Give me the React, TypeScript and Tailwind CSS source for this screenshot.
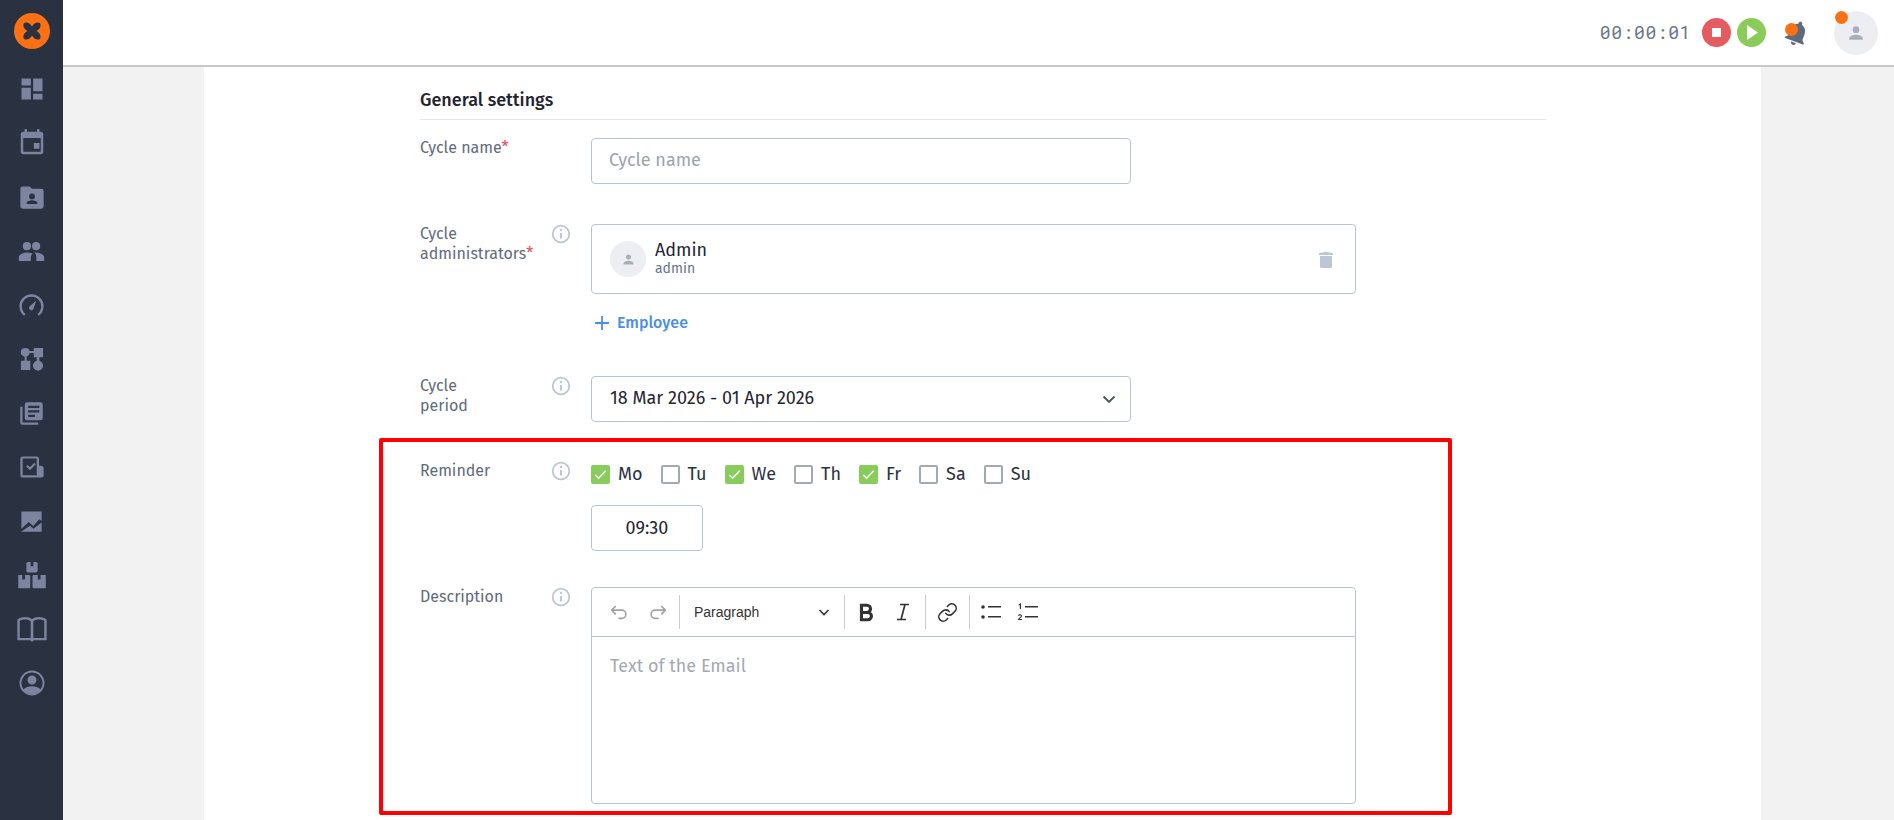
import React from "react";

const P = ({ d, size = 28, className = "" }: { d: string; size?: number; className?: string }) => (
  <svg width={size} height={size} viewBox="0 0 24 24" fill="currentColor" fillRule="evenodd" className={className}>
    <path d={d} />
  </svg>
);

const navIcons: { d: string; size: number }[] = [
  { d: "M3 3h8v6H3zM3 11h8v10H3zM13 3h8v11h-8zM13 16h8v5h-8z", size: 28 },
  { d: "M18 12h-4.500v4.500H18zM16 1v2H8V1H6v2H5a2 2 0 0 0-2 2v14c0 1.100.9 2 2 2h14a2 2 0 0 0 2-2V5a2 2 0 0 0-2-2h-1V1zm3 18H5V8h14z", size: 30 },
  { d: "M20 5h-8l-2-2H4a2 2 0 0 0-2 2v15c0 1.100.9 2 2 2h16a2 2 0 0 0 2-2V7a2 2 0 0 0-2-2zm-8 4a2.500 2.500 0 1 1 0 5 2.500 2.500 0 0 1 0-5zm4.500 9h-9v-1c0-1.500 3-2.300 4.500-2.300s4.500.8 4.500 2.300z", size: 28 },
  { d: "M8.200 11a3.400 3.400 0 1 0 0-6.800 3.400 3.400 0 0 0 0 6.800zm7.600 0a3.400 3.400 0 1 0 0-6.800 3.400 3.400 0 0 0 0 6.800zM8 12.800c-2.700 0-6.500 1.500-6.500 4.200v2.800h9.900V17c0-1.400.7-2.400 1.500-3.100-.9-.7-3.800-1.100-4.900-1.100zm8 0c-.5 0-1.100.1-1.600.2 1.200.9 1.600 2.300 1.600 3.800v3h6.500V17c0-2.700-3.800-4.200-6.500-4.200z", size: 29 },
  { d: "M5.800 20.500A10 10 0 1 1 18.200 20.500l-1.300-1.500A8 8 0 1 0 7.100 19zM10.600 15.400a2 2 0 0 0 2.800 0l2.600-7.500-5.400 4.700a2 2 0 0 0 0 2.800z", size: 29 },
  { d: "M6.500 2.500a3.600 3.600 0 0 1 3.500 2.700h3.500V2.500h8v8h-3.200v3.100a4.300 4.300 0 1 1-2.300 0v-3.100h-2.500V6.900H10a3.600 3.600 0 0 1-2.600 3.100v3.500h3.100v8h-8v-8h3.200V10a3.600 3.600 0 0 1 .8-7.500z", size: 28 },
  { d: "M4 6H2v14a2 2 0 0 0 2 2h14v-2H4zM20 2H8a2 2 0 0 0-2 2v12c0 1.100.9 2 2 2h12a2 2 0 0 0 2-2V4a2 2 0 0 0-2-2zm-1 9H9V9h10zm-4 4H9v-2h6zm4-8H9V5h10z", size: 27 },
  { d: "M4 3h12a2 2 0 0 1 2 2v6h1.500A2.500 2.500 0 0 1 22 13.500V19a2 2 0 0 1-2 2H4a2 2 0 0 1-2-2V5a2 2 0 0 1 2-2zm0 1.800V19h12.500c-.4-.6-.5-1.300-.5-2V5a.2.2 0 0 0-.2-.2zM7 11.500l1.300-1.300 2 2 3.600-3.900 1.300 1.300-4.900 5.200z", size: 28 },
  { d: "M3 3h18v8.500l-2-1.500-5.500 6-4-3.500L3 18.500zM3 21v-.2l7.600-5 3.100 2.700L21 12.800V21z", size: 27 },
  { d: "M8.700 1.500h2.200v3.500h2.200V1.500h2.200c.6 0 1.200.6 1.200 1.200v6c0 .6-.6 1.200-1.200 1.200H8.700c-.6 0-1.200-.6-1.200-1.200v-6c0-.6.6-1.200 1.200-1.200zM1 12h3.200v3.500h2.200V12h3.200c.5 0 1 .5 1 1v8.500c0 .5-.5 1-1 1H1zM13.400 12h3.200v3.500h2.200V12H23v10.500h-9.600a1 1 0 0 1-1-1V13c0-.5.5-1 1-1z", size: 30 },
  { d: "M12 21.500l-1.500-1H1V4.800C3 3.500 5 3 7 3c1.900 0 3.700.5 5 1.700C13.300 3.500 15.100 3 17 3c2 0 4 .5 6 1.800v15.700h-9.500zM2.800 5.800v12.900h8.200V6.200C9.900 5.300 8.400 4.800 7 4.800c-1.500 0-2.900.3-4.200 1zm18.400 0C19.900 5.100 18.500 4.800 17 4.800c-1.400 0-2.900.5-4 1.400v12.500h8.200z", size: 32 },
  { d: "M12 2a10 10 0 1 0 0 20 10 10 0 0 0 0-20zm0 1.600a8.400 8.400 0 0 1 6.700 13.400c-1.400-1.600-4-2.500-6.700-2.500s-5.300.9-6.700 2.500A8.400 8.400 0 0 1 12 3.600zm0 2.400a3.600 3.600 0 1 0 0 7.200A3.600 3.600 0 0 0 12 6z", size: 30 },
];

const Person = ({ size }: { size: number }) => (
  <svg width={size} height={size} viewBox="0 0 24 24" fill="#a9afbd">
    <circle cx="12" cy="8" r="4" />
    <path d="M4 20v-1.500C4 15.500 8.500 14 12 14s8 1.500 8 4.500V20z" />
  </svg>
);

const Info = () => (
  <svg width="20" height="20" viewBox="0 0 20 20" fill="none">
    <circle cx="10" cy="10" r="8.300" stroke="#bcc6d6" strokeWidth="1.800" />
    <circle cx="10" cy="6" r="1.200" fill="#bcc6d6" />
    <path d="M10 9v5.500" stroke="#bcc6d6" strokeWidth="2" />
  </svg>
);

const Row = ({ label, star, info, mt, children }: { label: React.ReactNode; star?: boolean; info?: boolean; mt: string; children: React.ReactNode }) => (
  <div className={`flex ${mt}`}>
    <div className="w-[131px] text-[16px] leading-[20px] text-[#5f6b7c]">
      {label}
      {star && <span className="text-[#e5484d]">*</span>}
    </div>
    <div className="w-[40px]">{info && <Info />}</div>
    <div className="flex-1">{children}</div>
  </div>
);

const days: [string, boolean][] = [
  ["Mo", true],
  ["Tu", false],
  ["We", true],
  ["Th", false],
  ["Fr", true],
  ["Sa", false],
  ["Su", false],
];

const Day = ({ name, on }: { name: string; on: boolean }) => (
  <div className="flex items-center gap-[8px]">
    {on ? (
      <div className="flex h-[19px] w-[19px] items-center justify-center rounded-[2px] bg-[#88cc5c]">
        <svg width="15" height="15" viewBox="0 0 16 16" fill="none">
          <path d="M2.500 8.500l3.500 3.500 7.500-8" stroke="#fff" strokeWidth="1.600" />
        </svg>
      </div>
    ) : (
      <div className="h-[19px] w-[19px] rounded-[2px] border-2 border-[#a4a9b6]" />
    )}
    <span className="text-[18px] text-[#2c3140]">{name}</span>
  </div>
);

const Sep = () => <div className="h-[34px] w-px bg-[#c9cdd3]" />;

const Stroke = ({ children, w = 22 }: { children: React.ReactNode; w?: number }) => (
  <svg width={w} height={w} viewBox="0 0 24 24" fill="none" stroke="currentColor" strokeWidth="1.800" strokeLinecap="round" strokeLinejoin="round">
    {children}
  </svg>
);

export default function App() {
  return (
    <div className="relative flex h-[820px] w-[1894px] overflow-hidden bg-[#f2f2f2] font-['Fira_Sans','Roboto','Noto_Sans',sans-serif]">
      <aside className="flex w-[63px] shrink-0 flex-col items-center bg-[#2a3140] text-[#7d84a0]">
        <div className="mt-[13px] flex h-[36px] w-[36px] items-center justify-center rounded-full bg-[#fb7113]">
          <svg width="26" height="26" viewBox="0 0 26 26" fill="#2a3140">
            <path d="M5 5c3-1.500 6 0 8 3.500C15 5 18 3.500 21 5c1.500 3 0 6-3.500 8 3.500 2 5 5 3.500 8-3 1.500-6 0-8-3.500C11 21 8 22.500 5 21c-1.500-3 0-6 3.500-8C5 11 3.500 8 5 5z" />
          </svg>
        </div>
        <div className="mt-[13px] flex flex-col">
          {navIcons.map((n, i) => (
            <div key={i} className="flex h-[54px] w-[63px] items-center justify-center">
              <P d={n.d} size={n.size} />
            </div>
          ))}
        </div>
      </aside>
      <div className="flex min-w-0 flex-1 flex-col">
        <header className="flex h-[67px] shrink-0 items-center justify-end border-b-2 border-[#c8c8c8] bg-white pr-[16px]">
          <span className="mr-[11px] font-['Roboto_Mono','DejaVu_Sans_Mono',monospace] text-[18px] tracking-[0.600px] text-[#67768c]">00:00:01</span>
          <div className="flex h-[29px] w-[29px] items-center justify-center rounded-full bg-[#e45b60]">
            <div className="h-[9px] w-[9px] bg-white" />
          </div>
          <div className="ml-[6px] flex h-[29px] w-[29px] items-center justify-center rounded-full bg-[#8acb5a]">
            <svg width="13" height="15" viewBox="0 0 13 15" fill="#fff" className="ml-[2px]">
              <path d="M1 0l11 7.500L1 15z" />
            </svg>
          </div>
          <div className="relative ml-[16px] h-[30px] w-[30px] text-[#5e6a7e]">
            <svg width="30" height="30" viewBox="0 0 24 24" fill="currentColor" className="rotate-[20deg]">
              <path d="M12 22a2 2 0 0 0 2-2h-4a2 2 0 0 0 2 2zm6-6v-5c0-3.100-1.600-5.600-4.500-6.300V4a1.500 1.500 0 0 0-3 0v.7C7.600 5.400 6 7.900 6 11v5l-2 2v1h16v-1z" />
            </svg>
            <div className="absolute left-[3px] top-[5px] h-[13px] w-[13px] rounded-full bg-[#fb7113]" />
          </div>
          <div className="relative ml-[22px] flex h-[44px] w-[44px] items-center justify-center rounded-full bg-[#eceef2]">
            <Person size={20} />
            <div className="absolute left-[1px] top-[0px] h-[13px] w-[13px] rounded-full bg-[#fb7113]" />
          </div>
        </header>
        <main className="ml-[141px] mr-[133px] flex-1 bg-white pl-[216px] pr-[215px]">
          <div className="flex h-[53px] items-end border-b border-[#e6e8ec] pb-[7px] text-[18px] font-medium leading-[24px] text-[#1f2430]">
            General settings
          </div>
          <Row label="Cycle name" star mt="mt-[18px]">
            <div className="flex h-[46px] w-[540px] items-center rounded-[4px] border border-[#b9c3d4] px-[17px] pb-[1px] text-[18px] text-[#9ca3af]">Cycle name</div>
          </Row>
          <Row label={<>Cycle<br />administrators</>} star info mt="mt-[40px]">
            <div className="flex h-[70px] w-[765px] items-center rounded-[4px] border border-[#b9c3d4] pl-[18px] pr-[19px]">
              <div className="flex h-[36px] w-[36px] items-center justify-center rounded-full bg-[#eceef2]">
                <Person size={15} />
              </div>
              <div className="ml-[9px] flex-1 -translate-y-[1px]">
                <div className="text-[18px] leading-[20px] text-[#1f2430]">Admin</div>
                <div className="text-[14px] leading-[17px] text-[#67738a]">admin</div>
              </div>
              <svg width="20" height="20" viewBox="0 0 20 20" fill="#bcc6d6">
                <path d="M3 4.500c1-1 3-1 4-1 .5-1 5.500-1 6 0 1 0 3 0 4 1V6H3zM4 7h12v10.500c0 .8-.7 1.500-1.500 1.500h-9C4.700 19 4 18.300 4 17.500z" />
              </svg>
            </div>
            <div className="mt-[18px] flex h-[22px] items-center pl-[4px] text-[16px] font-medium text-[#4a8fe7]">
              <svg width="14" height="14" viewBox="0 0 14 14" stroke="#4a8fe7" strokeWidth="1.800">
                <path d="M7 0v14M0 7h14" />
              </svg>
              <span className="ml-[8px]">Employee</span>
            </div>
          </Row>
          <Row label={<>Cycle<br />period</>} info mt="mt-[42px]">
            <div className="flex h-[46px] w-[540px] items-center justify-between rounded-[4px] border border-[#b9c3d4] pb-[2px] pl-[18px] pr-[11px] text-[18px] text-[#1f2430]">
              <span>18 Mar 2026 - 01 Apr 2026</span>
              <svg width="20" height="20" viewBox="0 0 20 20" fill="none" stroke="#4b5563" strokeWidth="1.800" className="translate-y-[1px]">
                <path d="M4.500 7.500l5.500 5.500 5.500-5.500" />
              </svg>
            </div>
          </Row>
          <Row label="Reminder" info mt="mt-[39px]">
            <div className="mt-[1px] flex h-[24px] items-center gap-[18px]">
              {days.map(([n, on]) => (
                <Day key={n} name={n} on={on} />
              ))}
            </div>
            <div className="mt-[19px] flex h-[46px] w-[112px] items-center justify-center rounded-[4px] border border-[#b9c3d4] text-[18px] text-[#1f2430]">09:30</div>
          </Row>
          <Row label="Description" info mt="mt-[36px]">
            <div className="h-[217px] w-[765px] rounded-[4px] border border-[#b9c3d4]">
              <div className="flex h-[49px] items-center border-b border-[#b9c3d4] font-['Liberation_Sans',sans-serif] text-[#333]">
                <div className="flex w-[87px] items-center justify-around pl-[8px] pr-[2px] text-[#a3a3a3]">
                  <Stroke>
                    <path d="M8 6L4 10l4 4M4 10h11a4.500 4.500 0 0 1 0 9h-3" />
                  </Stroke>
                  <Stroke>
                    <path d="M16 6l4 4-4 4M20 10H9a4.500 4.500 0 0 0 0 9h3" />
                  </Stroke>
                </div>
                <Sep />
                <div className="flex w-[164px] items-center justify-between pl-[14px] pr-[14px] text-[14px]">
                  <span>Paragraph</span>
                  <svg width="12" height="12" viewBox="0 0 12 12" fill="none" stroke="#333" strokeWidth="1.600">
                    <path d="M1.500 4l4.500 4.500L10.500 4" />
                  </svg>
                </div>
                <Sep />
                <div className="flex w-[80px] items-center justify-around px-[3px]">
                  <svg width="20" height="20" viewBox="0 0 22 22" fill="none" stroke="#333" strokeWidth="3.400">
                    <path d="M6 3.500h6a4 4 0 0 1 0 8H6zM6 11.500h7a4 4 0 0 1 0 8H6zM6 2v19" />
                  </svg>
                  <svg width="22" height="22" viewBox="0 0 22 22" fill="none" stroke="#333" strokeWidth="1.700">
                    <path d="M8 3.500h9M5 18.500h9M13 3.500l-4 15" />
                  </svg>
                </div>
                <Sep />
                <div className="flex w-[43px] items-center justify-center">
                  <Stroke w={21}>
                    <path d="M10 13a5 5 0 0 0 7.540.54l3-3a5 5 0 0 0-7.070-7.070l-1.720 1.710" />
                    <path d="M14 11a5 5 0 0 0-7.540-.54l-3 3a5 5 0 0 0 7.070 7.070l1.710-1.710" />
                  </Stroke>
                </div>
                <Sep />
                <div className="flex items-center gap-[15px] pl-[10px]">
                  <svg width="22" height="22" viewBox="0 0 22 22" fill="#333">
                    <circle cx="3" cy="6" r="1.800" />
                    <circle cx="3" cy="16" r="1.800" />
                    <path d="M8 5h13v1.600H8zM8 15h13v1.600H8z" />
                  </svg>
                  <svg width="22" height="22" viewBox="0 0 22 22" fill="#333">
                    <path d="M8 5h13v1.600H8zM8 15h13v1.600H8z" />
                    <path d="M1.500 3.500L4 2v6H2.800V3.900l-1.300.6zM1 14.500C1.500 12.800 5 12.800 5 15c0 1.300-1.800 2-2.500 3H5v1H1v-1c1-1.400 2.800-2.200 2.800-3.100 0-1-1.400-.9-1.800 0z" />
                  </svg>
                </div>
              </div>
              <div className="px-[18px] pt-[18px] text-[18px] leading-[22px] text-[#a3a9b5]">Text of the Email</div>
            </div>
          </Row>
        </main>
      </div>
      <div className="pointer-events-none absolute left-[379px] top-[438px] h-[377px] w-[1073px] rounded-[2px] border-[4px] border-[#ff0000]" />
    </div>
  );
}
